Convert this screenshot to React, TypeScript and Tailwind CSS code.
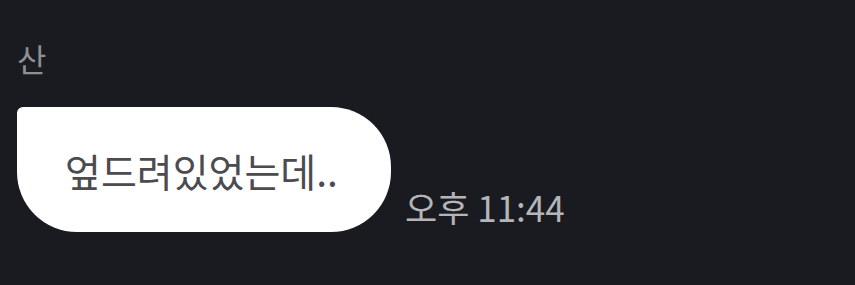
export default function App() {
  return (
    <div
      className="w-[855px] h-[285px] bg-[#1a1b20] pl-[17px] pt-[34px] overflow-hidden"
      style={{ fontFamily: '"Noto Sans CJK KR", "Noto Sans", sans-serif' }}
    >
      {/* Sender name */}
      <div className="text-[32px] leading-[48px] text-[#8e8e93]">산</div>

      {/* Message row */}
      <div className="mt-[25px] flex items-end gap-[14px]">
        <div className="w-[374px] h-[125px] bg-white rounded-tl-[6px] rounded-tr-[60px] rounded-br-[60px] rounded-bl-[60px] flex items-center pl-[48px]">
          <span className="text-[39px] leading-[48px] text-[#4b4b50] tracking-[0px]">엎드려있었는데..</span>
        </div>
        <span className="text-[35px] leading-[44px] text-[#b4b4b9] mb-[3px]">오후 11:44</span>
      </div>
    </div>
  );
}
